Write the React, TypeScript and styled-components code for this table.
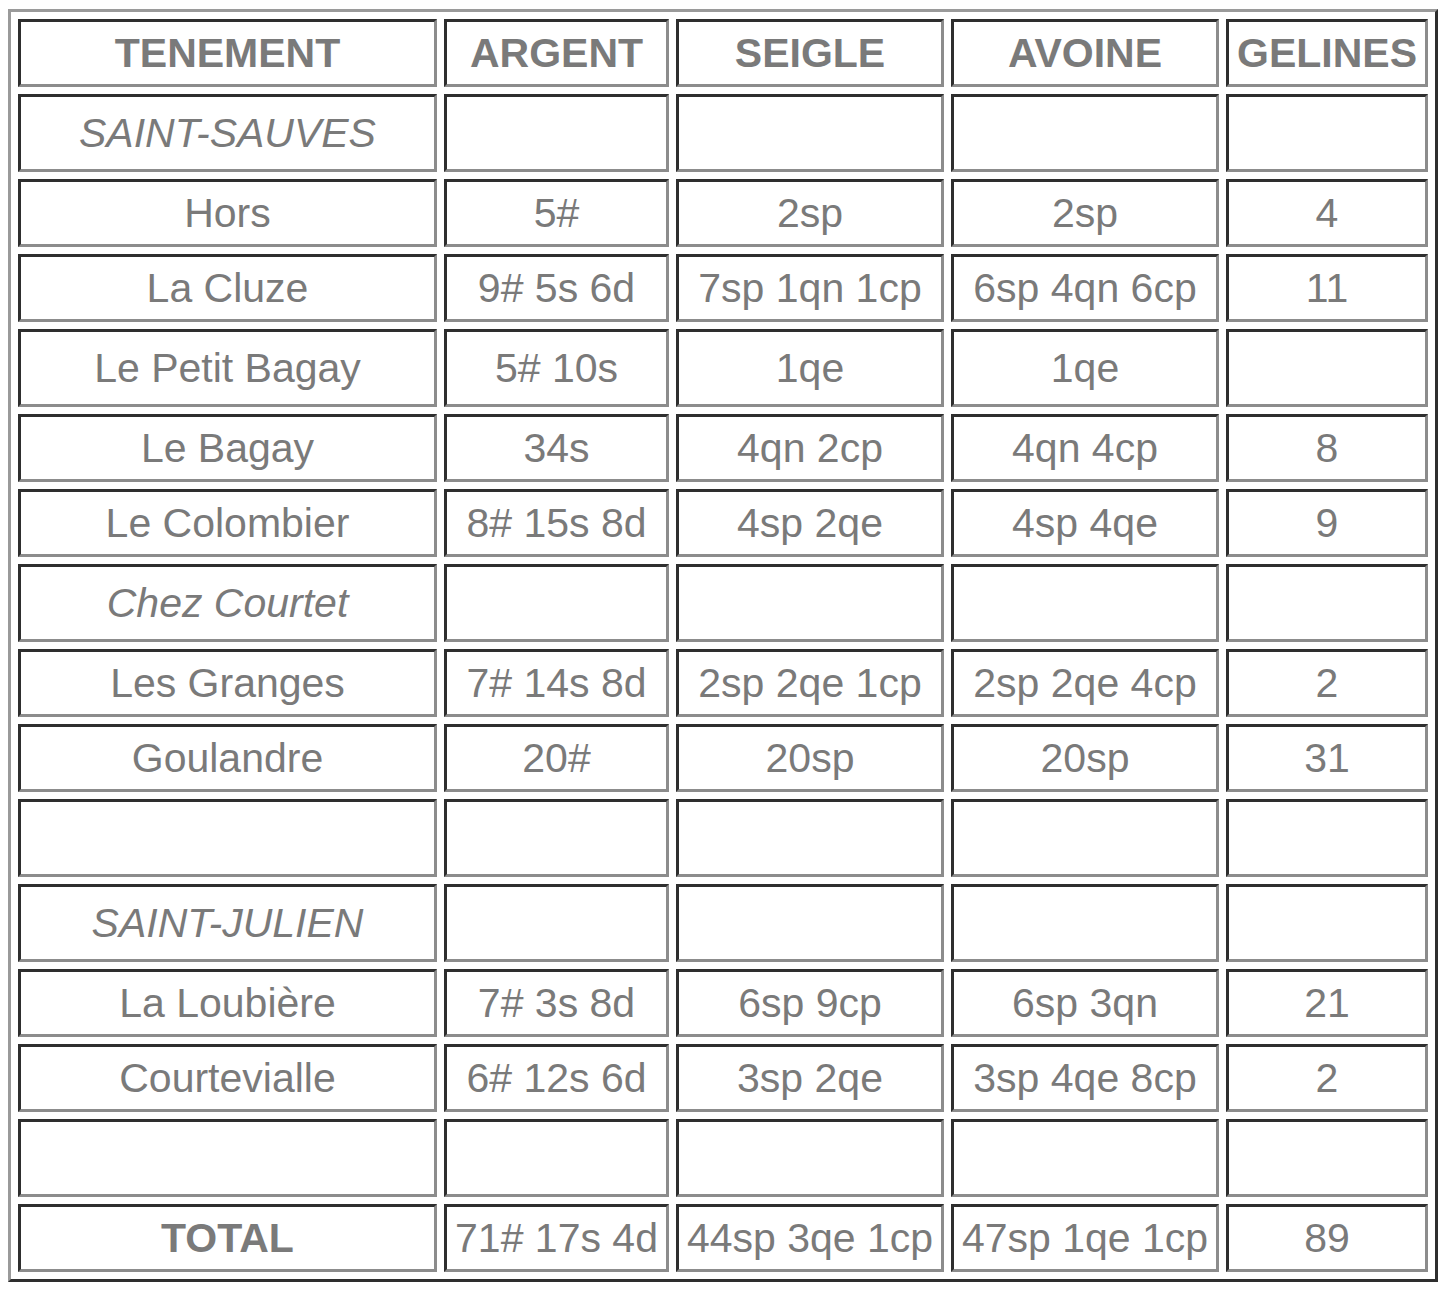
import React from 'react';
import styled, {createGlobalStyle} from 'styled-components';

const GlobalStyle = createGlobalStyle`
    body {
        margin: 0;
        background: #ffffff;
        font-family: 'Liberation Sans', Arial, sans-serif;
    }
`;

const Page = styled.div`
    padding: 9px 0 0 8px;
`;

const Table = styled.table`
    border-collapse: separate;
    border-spacing: 7px;
    border-style: solid;
    border-width: 3px;
    border-color: #9a9a9a #2e2e2e #2e2e2e #9a9a9a;
    table-layout: fixed;
    width: 1430px;
`;

const Cell = styled.td<{$width?: number; $tall?: boolean; $head?: boolean; $italic?: boolean}>`
    box-sizing: border-box;
    width: ${(props) => (props.$width ? `${props.$width}px` : 'auto')};
    height: ${(props) => (props.$tall ? 78 : 68)}px;
    padding: 0;
    border-style: solid;
    border-width: 3px;
    border-color: #2e2e2e #8c8c8c #8c8c8c #2e2e2e;
    text-align: center;
    vertical-align: middle;
    white-space: nowrap;
    overflow: hidden;
    font-size: 41px;
    line-height: 47px;
    color: #7a7a7a;
    font-weight: ${(props) => (props.$head ? 700 : 400)};
    font-style: ${(props) => (props.$italic ? 'italic' : 'normal')};
`;

type Row = {
    cells: Array<string>;
    head?: boolean;
    italic?: boolean;
};

const widths = [419, 225, 268, 268, 202];

const rows: Array<Row> = [
    {cells: ['TENEMENT', 'ARGENT', 'SEIGLE', 'AVOINE', 'GELINES'], head: true},
    {cells: ['SAINT-SAUVES', '', '', '', ''], italic: true},
    {cells: ['Hors', '5#', '2sp', '2sp', '4']},
    {cells: ['La Cluze', '9# 5s 6d', '7sp 1qn 1cp', '6sp 4qn 6cp', '11']},
    {cells: ['Le Petit Bagay', '5# 10s', '1qe', '1qe', '']},
    {cells: ['Le Bagay', '34s', '4qn 2cp', '4qn 4cp', '8']},
    {cells: ['Le Colombier', '8# 15s 8d', '4sp 2qe', '4sp 4qe', '9']},
    {cells: ['Chez Courtet', '', '', '', ''], italic: true},
    {cells: ['Les Granges', '7# 14s 8d', '2sp 2qe 1cp', '2sp 2qe 4cp', '2']},
    {cells: ['Goulandre', '20#', '20sp', '20sp', '31']},
    {cells: ['', '', '', '', '']},
    {cells: ['SAINT-JULIEN', '', '', '', ''], italic: true},
    {cells: ['La Loubière', '7# 3s 8d', '6sp 9cp', '6sp 3qn', '21']},
    {cells: ['Courtevialle', '6# 12s 6d', '3sp 2qe', '3sp 4qe 8cp', '2']},
    {cells: ['', '', '', '', '']},
    {cells: ['TOTAL', '71# 17s 4d', '44sp 3qe 1cp', '47sp 1qe 1cp', '89']},
];

export default function App() {
    return (
        <Page>
            <GlobalStyle />
            <Table>
                <tbody>
                    {rows.map((row, r) => {
                        // rows holding an empty cell come out taller
                        const tall = row.cells.some((c) => c === '');
                        return (
                            <tr key={r}>
                                {row.cells.map((text, c) => (
                                    <Cell
                                        key={c}
                                        $width={r === 0 ? widths[c] : undefined}
                                        $tall={tall}
                                        $head={row.head || (c === 0 && text === 'TOTAL')}
                                        $italic={row.italic && c === 0}
                                    >
                                        {text}
                                    </Cell>
                                ))}
                            </tr>
                        );
                    })}
                </tbody>
            </Table>
        </Page>
    );
}
